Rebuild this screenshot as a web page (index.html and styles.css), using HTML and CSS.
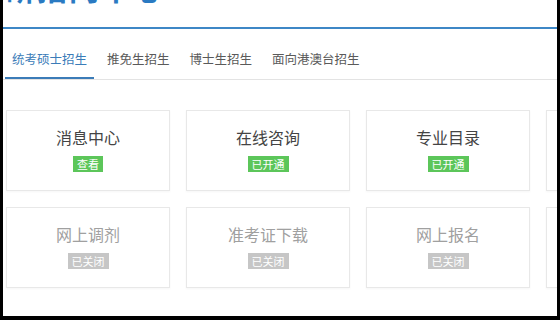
FILE: index.html
```html
<!DOCTYPE html>
<html lang="zh-CN">
<head>
<meta charset="utf-8">
<link rel="stylesheet" href="styles.css">
</head>
<body>
<div class="screen">
  <header class="header">
    <div class="title">研招网中心</div>
  </header>
  <nav class="tabs">
    <span class="tab active">统考硕士招生</span>
    <span class="tab">推免生招生</span>
    <span class="tab">博士生招生</span>
    <span class="tab">面向港澳台招生</span>
  </nav>
  <section class="cards">
    <div class="card"><div class="name">消息中心</div><span class="badge on">查看</span></div>
    <div class="card"><div class="name">在线咨询</div><span class="badge on">已开通</span></div>
    <div class="card"><div class="name">专业目录</div><span class="badge on">已开通</span></div>
    <div class="card"><div class="name">&nbsp;</div></div>
    <div class="card off"><div class="name">网上调剂</div><span class="badge">已关闭</span></div>
    <div class="card off"><div class="name">准考证下载</div><span class="badge">已关闭</span></div>
    <div class="card off"><div class="name">网上报名</div><span class="badge">已关闭</span></div>
    <div class="card off"><div class="name">&nbsp;</div></div>
  </section>
</div>
</body>
</html>
```
FILE: styles.css
```css
html, body {
  margin: 0;
  padding: 0;
  background: #000;
}
body {
  font-family: "Noto Sans CJK SC", "Noto Sans", sans-serif;
}
.screen {
  margin-left: 3px;
  width: 554px;
  height: 316px;
  background: #fff;
  overflow: hidden;
}
.header {
  height: 27px;
  border-bottom: 2px solid #3d87c6;
  overflow: hidden;
}
.title {
  margin-top: -28px;
  padding-left: 2px;
  font-size: 30px;
  line-height: 30px;
  font-weight: bold;
  color: #2a7ac2;
  letter-spacing: 2px;
}
.tabs {
  display: flex;
  gap: 6px;
  padding-left: 2px;
  border-bottom: 1px solid #e3e3e3;
}
.tab {
  padding: 12px 7px 0;
  line-height: 36px;
  font-size: 12.5px;
  color: #5a5a5a;
  border-bottom: 2px solid transparent;
}
.tab.active {
  color: #3b7cb8;
  border-bottom-color: #3b7cb8;
}
.cards {
  margin-top: 30px;
  padding-left: 3px;
  display: grid;
  grid-template-columns: repeat(4, 164px);
  grid-auto-rows: 81px;
  gap: 16px;
}
.card {
  box-sizing: border-box;
  border: 1px solid #e8e8e8;
  box-shadow: 0 1px 2px rgba(0, 0, 0, 0.04);
  display: flex;
  flex-direction: column;
  align-items: center;
  padding-top: 16px;
}
.name {
  font-size: 16px;
  line-height: 20px;
  color: #444;
}
.card.off .name {
  color: #a0a0a0;
}
.badge {
  margin-top: 9px;
  padding: 0 4px;
  font-size: 11px;
  line-height: 16px;
  color: #fff;
  background: #c6c6c6;
}
.badge.on {
  background: #5cc65a;
}
```
